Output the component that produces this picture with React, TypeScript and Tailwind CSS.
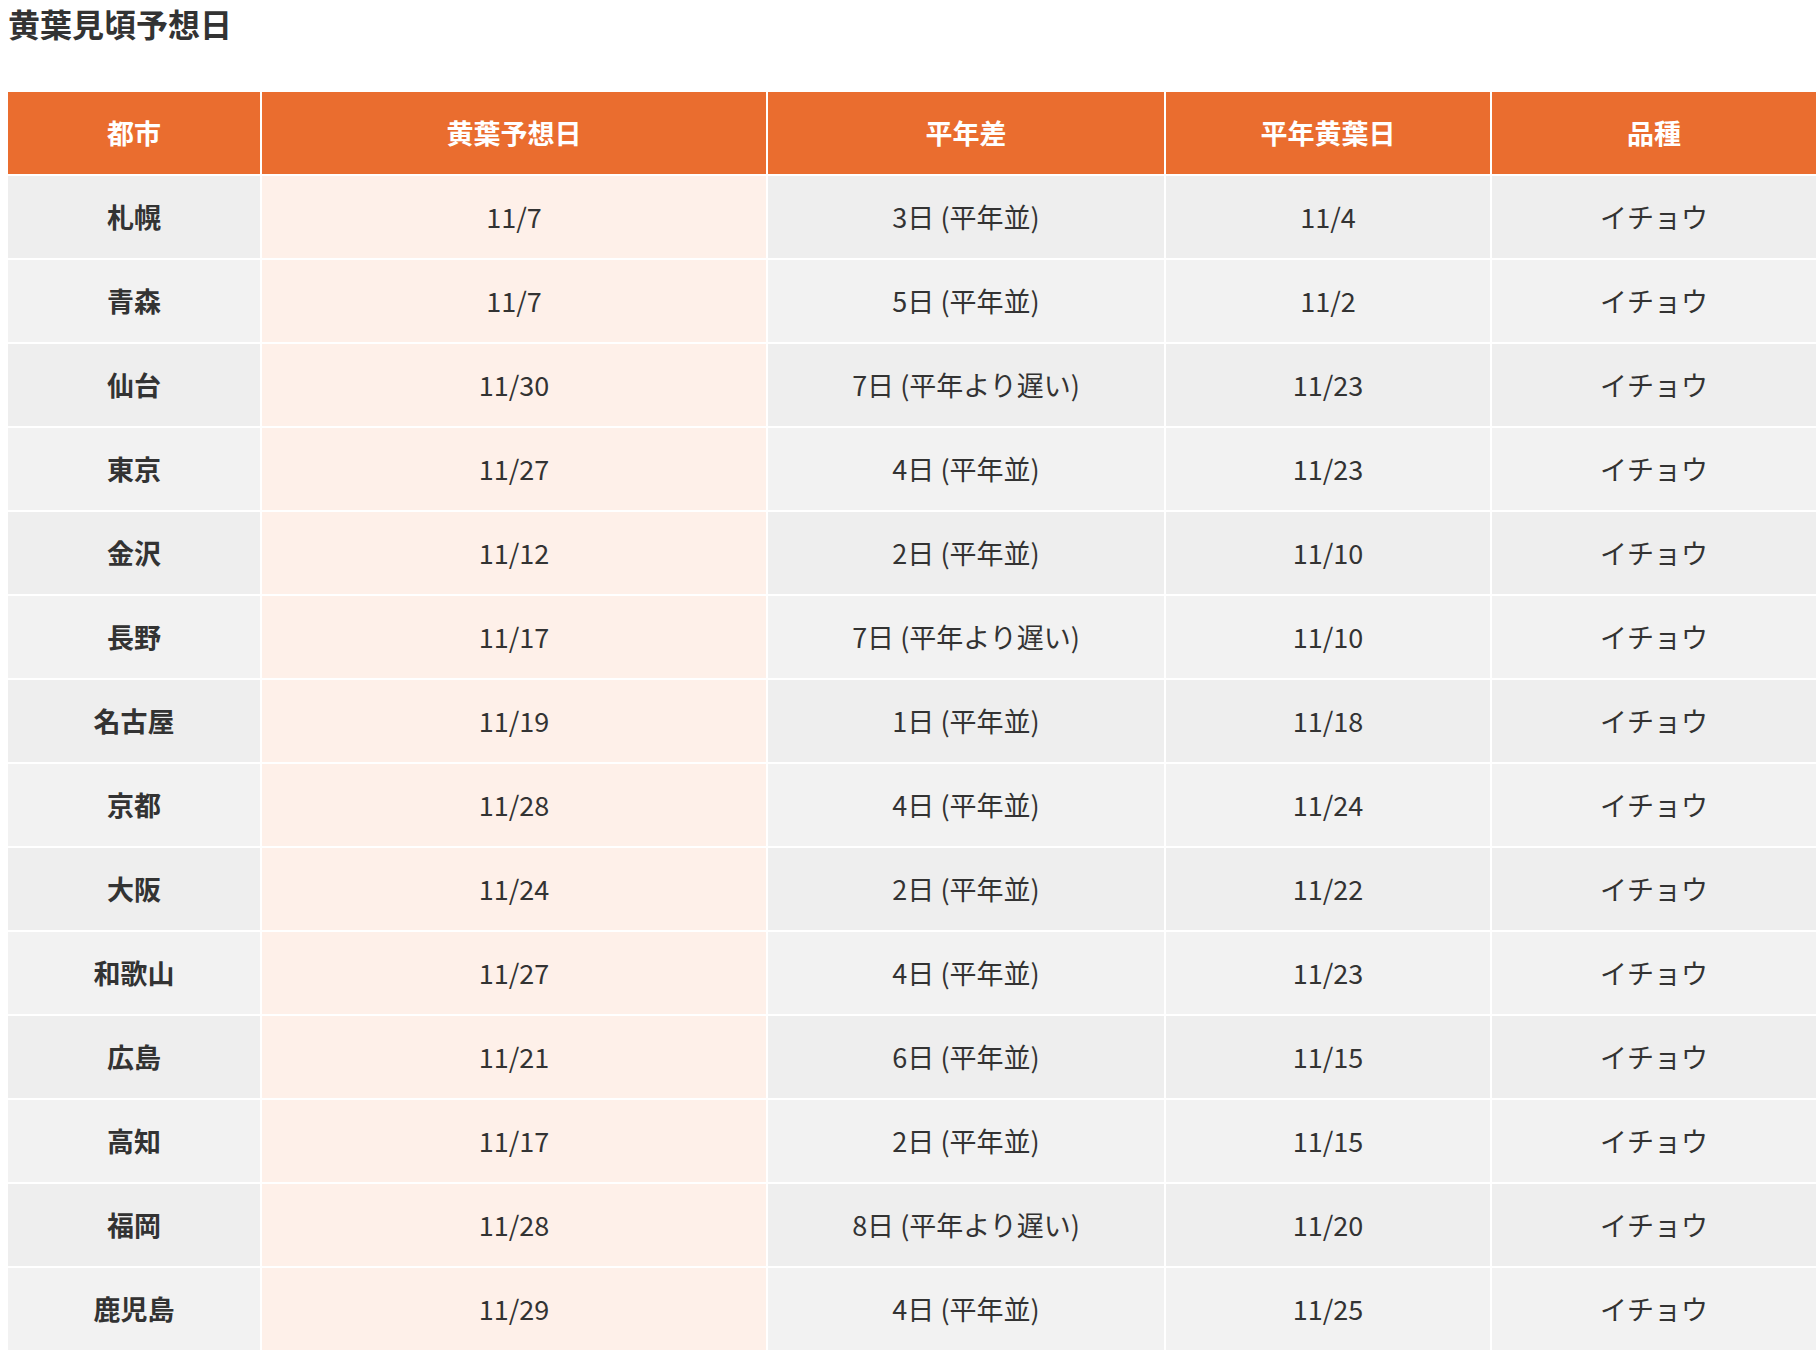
const rows = [
  { city: '札幌', forecast: '11/7', diff: '3日 (平年並)', normal: '11/4' },
  { city: '青森', forecast: '11/7', diff: '5日 (平年並)', normal: '11/2' },
  { city: '仙台', forecast: '11/30', diff: '7日 (平年より遅い)', normal: '11/23' },
  { city: '東京', forecast: '11/27', diff: '4日 (平年並)', normal: '11/23' },
  { city: '金沢', forecast: '11/12', diff: '2日 (平年並)', normal: '11/10' },
  { city: '長野', forecast: '11/17', diff: '7日 (平年より遅い)', normal: '11/10' },
  { city: '名古屋', forecast: '11/19', diff: '1日 (平年並)', normal: '11/18' },
  { city: '京都', forecast: '11/28', diff: '4日 (平年並)', normal: '11/24' },
  { city: '大阪', forecast: '11/24', diff: '2日 (平年並)', normal: '11/22' },
  { city: '和歌山', forecast: '11/27', diff: '4日 (平年並)', normal: '11/23' },
  { city: '広島', forecast: '11/21', diff: '6日 (平年並)', normal: '11/15' },
  { city: '高知', forecast: '11/17', diff: '2日 (平年並)', normal: '11/15' },
  { city: '福岡', forecast: '11/28', diff: '8日 (平年より遅い)', normal: '11/20' },
  { city: '鹿児島', forecast: '11/29', diff: '4日 (平年並)', normal: '11/25' },
]

const headers = ['都市', '黄葉予想日', '平年差', '平年黄葉日', '品種']

export default function App() {
  return (
    <div
      className="bg-white text-[#333333] pl-2 pr-[2px]"
      style={{ fontFamily: '"Noto Sans CJK JP", "Noto Sans", sans-serif' }}
    >
      <h2 className="text-[32px] font-bold leading-[46px] mb-[46px]">黄葉見頃予想日</h2>

      {/* Table */}
      <div className="grid grid-cols-[252px_504px_396px_324px_324px] gap-[2px] text-[27px]">
        {headers.map((h) => (
          <div
            key={h}
            className="h-[82px] flex items-center justify-center bg-[#ea6d2f] text-white font-bold"
          >
            {h}
          </div>
        ))}

        {rows.map((r, i) => {
          const bg = i % 2 === 0 ? 'bg-[#eeeeee]' : 'bg-[#f2f2f2]'
          return [
            <div key={r.city + 'c'} className={`h-[82px] flex items-center justify-center font-bold ${bg}`}>
              {r.city}
            </div>,
            <div key={r.city + 'f'} className="h-[82px] flex items-center justify-center bg-[#fef0e9]">
              {r.forecast}
            </div>,
            <div key={r.city + 'd'} className={`h-[82px] flex items-center justify-center ${bg}`}>
              {r.diff}
            </div>,
            <div key={r.city + 'n'} className={`h-[82px] flex items-center justify-center ${bg}`}>
              {r.normal}
            </div>,
            <div key={r.city + 'v'} className={`h-[82px] flex items-center justify-center ${bg}`}>
              イチョウ
            </div>,
          ]
        })}
      </div>
    </div>
  )
}
